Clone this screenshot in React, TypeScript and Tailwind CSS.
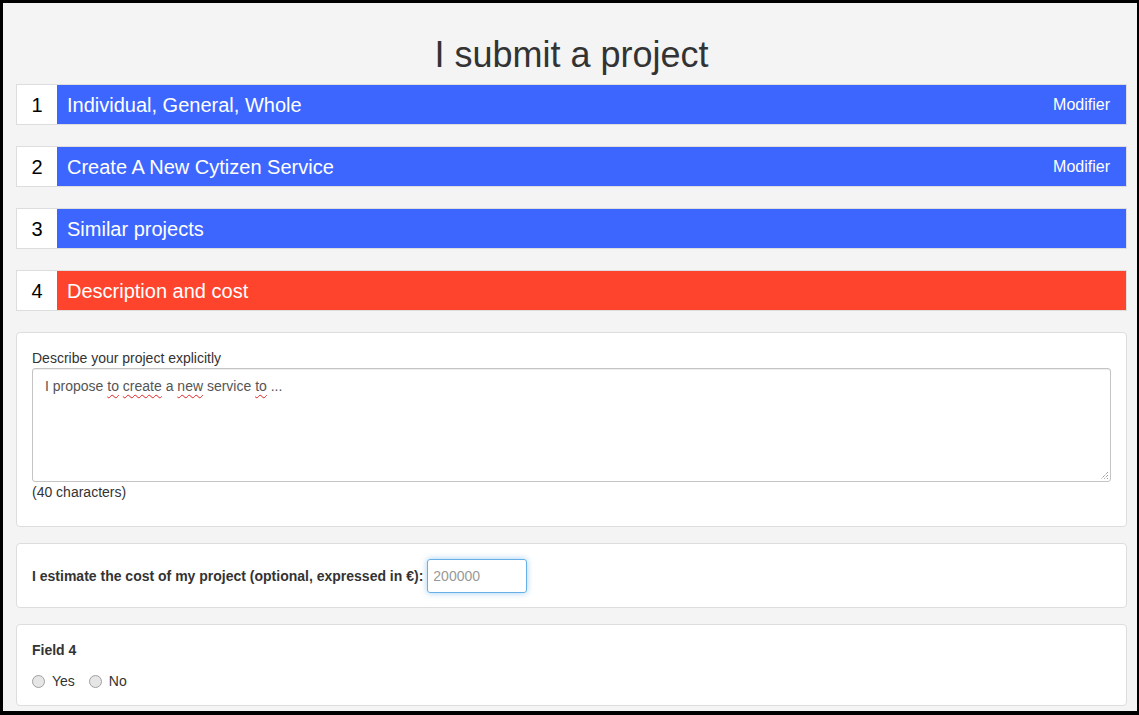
import React from 'react';

const steps = [
  { n: 1, label: 'Individual, General, Whole', edit: true, color: 'bg-[#3d66ff]' },
  { n: 2, label: 'Create A New Cytizen Service', edit: true, color: 'bg-[#3d66ff]' },
  { n: 3, label: 'Similar projects', edit: false, color: 'bg-[#3d66ff]' },
  { n: 4, label: 'Description and cost', edit: false, color: 'bg-[#ff442d]' },
];

function Typo({ children }: { children: React.ReactNode }) {
  return (
    <span className="underline decoration-wavy decoration-[#e02020] decoration-1 underline-offset-[3px]">
      {children}
    </span>
  );
}

function Radio({ label }: { label: string }) {
  return (
    <label className="flex items-center gap-[7px]">
      <span className="h-[13px] w-[13px] rounded-full border border-[#a0a0a0] bg-[#e6e6e6]" />
      <span>{label}</span>
    </label>
  );
}

export default function App() {
  return (
    <div
      className="h-[715px] w-[1139px] overflow-hidden border-[3px] border-b-4 border-r-2 border-black bg-[#f4f4f4] pl-[13px] pr-[10px] text-[#333]"
      style={{ fontFamily: '"Liberation Sans", Arial, sans-serif' }}
    >
      <h1 className="pt-[32px] pb-[9px] text-center text-[36px] leading-[40px]">I submit a project</h1>

      <div className="flex flex-col gap-[21px]">
        {steps.map((s) => (
          <div key={s.n} className="flex h-[41px] border border-[#ddd] bg-white">
            <div className="flex w-[40px] items-center justify-center text-[20px] text-black">{s.n}</div>
            <div className={`flex flex-1 items-center justify-between pl-[10px] pr-[16px] text-white ${s.color}`}>
              <span className="text-[20px]">{s.label}</span>
              {s.edit && <span className="text-[16px]">Modifier</span>}
            </div>
          </div>
        ))}
      </div>

      <div className="mt-[21px] flex flex-col gap-[16px]">
        {/* Description */}
        <div className="rounded-[4px] border border-[#ddd] bg-white px-[15px] pt-[15px] pb-[24px] text-[14px]">
          <div className="leading-[20px]">Describe your project explicitly</div>
          <div className="relative h-[114px] rounded-[3px] border border-[#c4c4c4] px-[12px] py-[7px] leading-[20px] text-[#555] shadow-[inset_0_1px_1px_rgba(0,0,0,0.075)]">
            I propose <Typo>to</Typo> <Typo>create</Typo> a <Typo>new</Typo> service <Typo>to</Typo> ...
            <svg className="absolute right-[1px] bottom-[1px]" width="10" height="10" viewBox="0 0 10 10">
              <path d="M9 2 L2 9 M9 5 L5 9 M9 8 L8 9" stroke="#777" strokeWidth="1" strokeDasharray="1 1" />
            </svg>
          </div>
          <div className="leading-[20px]">(40 characters)</div>
        </div>

        {/* Cost */}
        <div className="flex items-center gap-[4px] rounded-[4px] border border-[#ddd] bg-white px-[15px] pt-[15px] pb-[14px] text-[14px]">
          <span className="font-bold">I estimate the cost of my project (optional, expressed in €):</span>
          <div className="flex h-[34px] w-[100px] items-center rounded-[3px] border border-[#66afe9] px-[5px] text-[#999] shadow-[0_0_6px_rgba(102,175,233,0.6)]">
            200000
          </div>
        </div>

        {/* Field 4 */}
        <div className="rounded-[4px] border border-[#ddd] bg-white px-[15px] pt-[15px] pb-[14px] text-[14px]">
          <div className="font-bold leading-[20px]">Field 4</div>
          <div className="mt-[11px] flex gap-[14px] leading-[20px]">
            <Radio label="Yes" />
            <Radio label="No" />
          </div>
        </div>
      </div>
    </div>
  );
}
